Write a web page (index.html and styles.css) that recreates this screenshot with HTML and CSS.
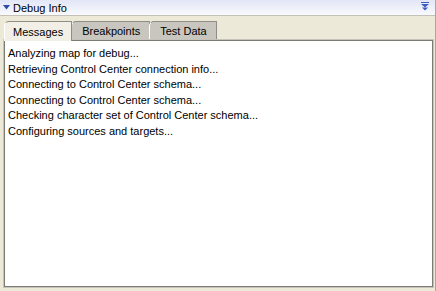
FILE: index.html
```html
<!DOCTYPE html>
<html lang="en">
<head>
  <meta charset="UTF-8">
  <title>Debug Info</title>
  <link rel="stylesheet" href="styles.css">
</head>
<body>
  <div class="view">
    <div class="titlebar">
      <svg class="tri" width="7" height="5" viewBox="0 0 7 5"><path d="M0 0h7L3.5 4.5z" fill="#2a4fa8"/></svg>
      <span class="title">Debug Info</span>
      <svg class="collapse" width="8" height="9" viewBox="0 0 8 9">
        <path d="M0 0h8v1H0z" fill="#3b5ec0"/>
        <path d="M0 2h8L4 5.5z" fill="#3b5ec0"/>
        <path d="M1 5.5h6L4 8.5z" fill="#3b5ec0"/>
      </svg>
    </div>
    <div class="body">
      <div class="tabs">
        <div class="tab active">Messages</div>
        <div class="tab">Breakpoints</div>
        <div class="tab">Test Data</div>
      </div>
      <div class="pane">
        <div class="line">Analyzing map for debug...</div>
        <div class="line">Retrieving Control Center connection info...</div>
        <div class="line">Connecting to Control Center schema...</div>
        <div class="line">Connecting to Control Center schema...</div>
        <div class="line">Checking character set of Control Center schema...</div>
        <div class="line">Configuring sources and targets...</div>
      </div>
    </div>
  </div>
</body>
</html>
```

FILE: styles.css
```css
html, body { margin: 0; padding: 0; }
body {
  width: 436px;
  height: 291px;
  overflow: hidden;
  font-family: "Liberation Sans", Arial, sans-serif;
  font-size: 11px;
  color: #000;
}

.view {
  display: flex;
  flex-direction: column;
  height: 291px;
  background: #ece9d8;
  border-right: 1px solid #a9a79f;
  box-sizing: border-box;
}

.titlebar {
  display: flex;
  align-items: center;
  height: 15px;
  border-bottom: 1px solid #c4c1b8;
  background: linear-gradient(#e2e6f6, #f9fafe);
  padding: 0 6px 0 3px;
}
.tri { margin-right: 3px; }
.title { flex: 1; }
.collapse { margin-top: -3px; }

.body {
  flex: 1;
  display: flex;
  flex-direction: column;
  padding: 4px 2px 4px 4px;
}

.tabs {
  display: flex;
  height: 20px;
  align-items: flex-end;
}
.tab {
  height: 19px;
  line-height: 19px;
  padding: 0 9px 0 10px;
  background: #c8c6be;
  border: 1px solid #8f8d86;
  border-bottom: none;
  border-left-color: #fff;
  border-radius: 5px 1px 0 0;
  margin-right: -1px;
  box-sizing: border-box;
}
.tab.active {
  height: 20px;
  line-height: 21px;
  background: #f2f0e6;
  padding: 0 8px 0 8px;
  position: relative;
  z-index: 1;
  margin-bottom: -1px;
}

.pane {
  flex: 1;
  background: #fff;
  border: 1px solid #7d7b75;
  box-shadow: 0 0 0 1px #c6c3ba;
  padding: 5px 3px;
}
.line {
  height: 15.6px;
  line-height: 15.6px;
  white-space: nowrap;
}
```
